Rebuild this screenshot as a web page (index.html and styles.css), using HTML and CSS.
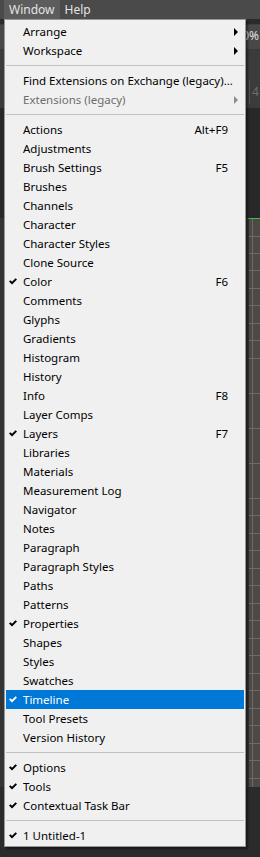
FILE: index.html
```html
<!DOCTYPE html>
<html lang="en">

<head>
    <meta charset="UTF-8">
    <title>Window menu</title>
    <link rel="stylesheet" href="styles.css">
</head>

<body>
    <header class="menubar">
        <span class="bar-item open">Window</span>
        <span class="bar-item">Help</span>
    </header>

    <section class="workspace">
        <div class="optbar">100%</div>
        <div class="tabbar"><span class="tab">4</span></div>
        <div class="canvas"></div>
        <div class="timeline">
            <div class="tl-left"></div>
            <div class="tl-grid"></div>
        </div>
    </section>

    <nav class="dropdown">
        <div class="row"><span class="label">Arrange</span><span class="arrow"></span></div>
        <div class="row"><span class="label">Workspace</span><span class="arrow"></span></div>
        <div class="sep"></div>
        <div class="row"><span class="label">Find Extensions on Exchange (legacy)...</span></div>
        <div class="row off"><span class="label">Extensions (legacy)</span><span class="arrow"></span></div>
        <div class="sep"></div>
        <div class="row"><span class="label">Actions</span><span class="key">Alt+F9</span></div>
        <div class="row"><span class="label">Adjustments</span></div>
        <div class="row"><span class="label">Brush Settings</span><span class="key">F5</span></div>
        <div class="row"><span class="label">Brushes</span></div>
        <div class="row"><span class="label">Channels</span></div>
        <div class="row"><span class="label">Character</span></div>
        <div class="row"><span class="label">Character Styles</span></div>
        <div class="row"><span class="label">Clone Source</span></div>
        <div class="row"><span class="chk"><svg viewBox="0 0 8 7"><path d="M0 3.6 L1.4 2.2 L3 3.8 L6.6 0.2 L8 1.6 L3 6.6 Z"/></svg></span><span class="label">Color</span><span class="key">F6</span></div>
        <div class="row"><span class="label">Comments</span></div>
        <div class="row"><span class="label">Glyphs</span></div>
        <div class="row"><span class="label">Gradients</span></div>
        <div class="row"><span class="label">Histogram</span></div>
        <div class="row"><span class="label">History</span></div>
        <div class="row"><span class="label">Info</span><span class="key">F8</span></div>
        <div class="row"><span class="label">Layer Comps</span></div>
        <div class="row"><span class="chk"><svg viewBox="0 0 8 7"><path d="M0 3.6 L1.4 2.2 L3 3.8 L6.6 0.2 L8 1.6 L3 6.6 Z"/></svg></span><span class="label">Layers</span><span class="key">F7</span></div>
        <div class="row"><span class="label">Libraries</span></div>
        <div class="row"><span class="label">Materials</span></div>
        <div class="row"><span class="label">Measurement Log</span></div>
        <div class="row"><span class="label">Navigator</span></div>
        <div class="row"><span class="label">Notes</span></div>
        <div class="row"><span class="label">Paragraph</span></div>
        <div class="row"><span class="label">Paragraph Styles</span></div>
        <div class="row"><span class="label">Paths</span></div>
        <div class="row"><span class="label">Patterns</span></div>
        <div class="row"><span class="chk"><svg viewBox="0 0 8 7"><path d="M0 3.6 L1.4 2.2 L3 3.8 L6.6 0.2 L8 1.6 L3 6.6 Z"/></svg></span><span class="label">Properties</span></div>
        <div class="row"><span class="label">Shapes</span></div>
        <div class="row"><span class="label">Styles</span></div>
        <div class="row"><span class="label">Swatches</span></div>
        <div class="row hover"><span class="chk"><svg viewBox="0 0 8 7"><path d="M0 3.6 L1.4 2.2 L3 3.8 L6.6 0.2 L8 1.6 L3 6.6 Z"/></svg></span><span class="label">Timeline</span></div>
        <div class="row"><span class="label">Tool Presets</span></div>
        <div class="row"><span class="label">Version History</span></div>
        <div class="sep"></div>
        <div class="row"><span class="chk"><svg viewBox="0 0 8 7"><path d="M0 3.6 L1.4 2.2 L3 3.8 L6.6 0.2 L8 1.6 L3 6.6 Z"/></svg></span><span class="label">Options</span></div>
        <div class="row"><span class="chk"><svg viewBox="0 0 8 7"><path d="M0 3.6 L1.4 2.2 L3 3.8 L6.6 0.2 L8 1.6 L3 6.6 Z"/></svg></span><span class="label">Tools</span></div>
        <div class="row"><span class="chk"><svg viewBox="0 0 8 7"><path d="M0 3.6 L1.4 2.2 L3 3.8 L6.6 0.2 L8 1.6 L3 6.6 Z"/></svg></span><span class="label">Contextual Task Bar</span></div>
        <div class="sep"></div>
        <div class="row"><span class="chk"><svg viewBox="0 0 8 7"><path d="M0 3.6 L1.4 2.2 L3 3.8 L6.6 0.2 L8 1.6 L3 6.6 Z"/></svg></span><span class="label">1 Untitled-1</span></div>
    </nav>
</body>

</html>
```

FILE: styles.css
```css
body {
    margin: 0;
    width: 260px;
    height: 857px;
    overflow: hidden;
    background-color: #2b2b2b;
    font-family: "Noto Sans", "Open Sans", sans-serif;
    font-size: 12px;
}

.menubar {
    display: flex;
    height: 19px;
    padding-left: 4px;
    background-color: #4a4a4a;
    color: #e4e4e4;
    line-height: 19px;
}

.bar-item {
    padding: 0 5px;
}

.bar-item.open {
    background-color: #5d5d5d;
}

/* photoshop panels peeking out behind the menu */

.workspace {
    background-color: #3f3f3f;
}

.optbar {
    height: 24px;
    margin-top: 5px;
    padding-right: 1px;
    background-color: #484848;
    border-top: 1px solid #3e3e3e;
    border-bottom: 1px solid #3a3a3a;
    color: #e0e0e0;
    text-align: right;
    line-height: 22px;
}

.tabbar {
    display: flex;
    justify-content: flex-end;
    height: 58px;
    background-color: #3b3b3b;
}

.tab {
    width: 8px;
    height: 24px;
    margin-top: 30px;
    padding-left: 2px;
    border-left: 1px solid #555555;
    color: #6e6e6e;
    line-height: 24px;
}

.canvas {
    height: 110px;
    background-color: #282828;
}

.timeline {
    display: flex;
    height: 569px;
}

.tl-left {
    flex: 1;
    background-color: #343434;
}

.tl-grid {
    width: 11px;
    border-left: 2px solid #333333;
    border-top: 1px solid #3fbf3f;
    background-color: #4e4946;
    background-image:
        linear-gradient(90deg, transparent 3px, #6e6966 3px, #6e6966 4px, transparent 4px),
        repeating-linear-gradient(180deg, transparent 0, transparent 16.5px, #6f6a67 16.5px, #6f6a67 17.5px);
}

/* the open Window menu */

.dropdown {
    position: absolute;
    top: 19px;
    left: 4px;
    width: 238px;
    padding: 2px 1px 1px 1px;
    background-color: #f0f0f0;
    border: 1px solid #979797;
    box-shadow: 2px 2px 2px rgba(0, 0, 0, 0.45);
    color: #000000;
    font-size: 11.5px;
}

.row {
    display: grid;
    grid-template-columns: 17px 1fr auto 16px;
    height: 19px;
    line-height: 19px;
    white-space: nowrap;
}

.chk {
    grid-column: 1;
    display: flex;
    align-items: center;
    padding-left: 3px;
}

.chk svg {
    width: 8px;
    height: 7px;
    fill: #000000;
}

.label {
    grid-column: 2;
}

.key {
    grid-column: 3;
}

.arrow {
    grid-column: 4;
    display: flex;
    align-items: center;
    justify-content: center;
}

.arrow::before {
    content: "";
    border-top: 4px solid transparent;
    border-bottom: 4px solid transparent;
    border-left: 4px solid #000000;
}

.row.off {
    color: #6d6d6d;
}

.row.off .arrow::before {
    border-left-color: #8c8c8c;
}

.row.hover {
    background-color: #0078d7;
    color: #ffffff;
}

.row.hover .chk svg {
    fill: #ffffff;
}

.sep {
    height: 1px;
    margin: 5px 0;
    background-color: #c2c2c2;
}
```
